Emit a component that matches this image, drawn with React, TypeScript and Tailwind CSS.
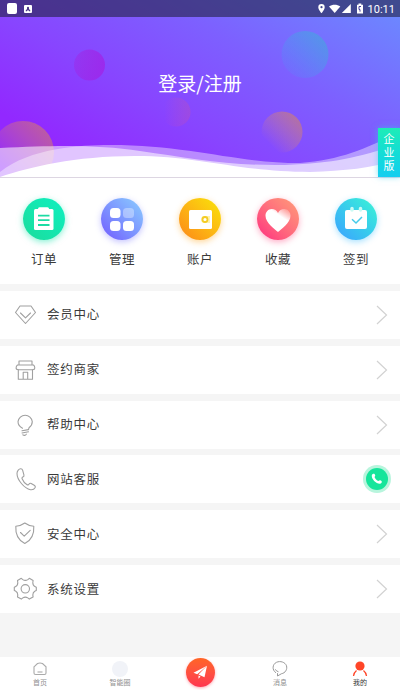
import React from "react";

type IconProps = { children: React.ReactNode };

const LineIcon: React.FC<IconProps> = ({ children }) => (
  <svg
    width="26"
    height="26"
    viewBox="0 0 26 26"
    fill="none"
    stroke="#a0a0a0"
    strokeWidth="1.1"
    strokeLinecap="round"
    strokeLinejoin="round"
  >
    {children}
  </svg>
);

const shortcuts = [
  {
    label: "订单",
    circle: "bg-linear-to-tr from-[#1bdc9c] to-[#0cf0c0] shadow-[0_2px_6px_#14e6ac80]",
    icon: (
      <>
        <rect x="11.5" y="11" width="19.5" height="21" rx="1.5" fill="#fff" />
        <rect x="15.5" y="9.3" width="11" height="4" rx="1.5" fill="#fff" />
        <path d="M15.5 17.6h11.5M15.5 22.2h11.5M15.5 27h11.5" stroke="#1cdca4" strokeWidth="1.8" />
      </>
    ),
  },
  {
    label: "管理",
    circle: "bg-linear-to-tr from-[#7257ff] to-[#8bcdff] shadow-[0_2px_6px_#7b78ff70]",
    icon: (
      <>
        <rect x="9.5" y="10" width="10.5" height="10" rx="3.5" fill="#fff" />
        <rect x="22.5" y="10" width="11" height="10" rx="3.5" fill="#fff" fillOpacity=".35" />
        <rect x="9.5" y="23" width="10.5" height="10" rx="3.5" fill="#fff" />
        <rect x="22.5" y="23" width="11" height="10" rx="3.5" fill="#fff" />
      </>
    ),
  },
  {
    label: "账户",
    circle: "bg-linear-to-tr from-[#fb8618] to-[#f8e506] shadow-[0_2px_6px_#ffa51770]",
    icon: (
      <>
        <rect x="10.5" y="12" width="23" height="19" rx="1.5" fill="#fff" />
        <path d="M31.5 18h-5.5a3.5 3.5 0 0 0 0 7h5.5z" fill="#fff3b0" />
        <circle cx="26.5" cy="21.5" r="2.5" fill="#fff" stroke="#f4cc25" strokeWidth="1.8" />
      </>
    ),
  },
  {
    label: "收藏",
    circle: "bg-linear-to-tr from-[#ff207f] to-[#ff9c78] shadow-[0_2px_6px_#ff467f70]",
    icon: (
      <>
        <defs>
          <linearGradient id="heart" x1=".65" y1=".35" x2=".9" y2="0">
            <stop offset="0" stopColor="#fff" />
            <stop offset="1" stopColor="#fff" stopOpacity=".15" />
          </linearGradient>
        </defs>
        <path
          d="M21.5 34C19 31.8 9 25 9 17.8 9 13.8 11.8 11 15.3 11c2.8 0 5 1.5 6.2 4 1.2-2.5 3.4-4 6.2-4C31.2 11 34 13.8 34 17.8 34 25 24 31.8 21.5 34z"
          fill="url(#heart)"
        />
      </>
    ),
  },
  {
    label: "签到",
    circle: "bg-linear-to-tr from-[#3d9fff] to-[#3cf5d3] shadow-[0_2px_6px_#3dbcff70]",
    icon: (
      <>
        <rect x="10.5" y="12" width="22" height="19" rx="2" fill="#fff" />
        <path d="M17.5 10.5v1.5M26 10.5v1.5" stroke="#c8fbf4" strokeWidth="3.5" strokeLinecap="round" />
        <path d="M17.5 21.3l4 3.7 6-6" fill="none" stroke="#46cbea" strokeWidth="1.5" />
      </>
    ),
  },
];

const menu = [
  {
    label: "会员中心",
    icon: (
      <>
        <path d="M8 4h11l4.500 6.500-10 11L3.500 10.500z" />
        <path d="M8.500 11l5 4.800 5-4.800" />
      </>
    ),
  },
  {
    label: "签约商家",
    icon: (
      <>
        <path d="M7 4h13v4M7 4v4M5.500 8h16c1 .8 1.300 1.800 1.300 3 0 1-1 1.700-2 1.700H6.300c-1.200 0-2.200-.7-2.200-1.700 0-1.200.4-2.200 1.400-3z" />
        <path d="M6.300 12.700v9.500h14.200v-9.500M11.200 22.200v-7h4.500v7" />
      </>
    ),
  },
  {
    label: "帮助中心",
    icon: (
      <>
        <path d="M10.500 16.300C7.500 14.800 6 12.600 6 9.600a7.200 7.200 0 0 1 14.300 0c0 2.600-1.300 4.700-3.300 6.200l-.5 1.700" />
        <path d="M10 18.800l6.500-1.200M10 21l6.500-1.200M10.800 22.800q2 1.500 3.500-.6" />
      </>
    ),
  },
  {
    label: "网站客服",
    phone: true,
    icon: (
      <path d="M8.800 2.700C7 2.500 5 4.900 5 7.500c0 6.300 7.300 15 13.500 16.200 2.200.3 4-.9 4.700-2.200.5-1-.2-1.700-1-2.200l-3-1.800c-1-.5-1.700-.2-2.300.8-.4.800-1 .8-1.800.4-2.400-1.400-4.200-4-5-6-.3-.8 0-1.300.8-1.600 1.100-.4 1.300-1.200 1-2.200l-1.300-4.700c-.3-.9-.9-1.400-1.800-1.500z" />
    ),
  },
  {
    label: "安全中心",
    icon: (
      <>
        <path d="M12.800 2c2.700 2 5.600 3 9 3.200.5 8.300-2 13.800-9 17.300-7-3.500-9.500-9-9-17.300 3.400-.2 6.300-1.200 9-3.200z" />
        <path d="M8.500 11.500l3.700 3.700 6-5.800" />
      </>
    ),
  },
  {
    label: "系统设置",
    icon: (
      <>
        <path d="M9.300 2.300l1.500 1.300c1.500.9 3.600.9 5 0l1.500-1.300 3.800 2.200-.3 2.200c0 1.700 1 3.300 2.500 4l1 .5v3.300l-1.200.6c-1.400.8-2.300 2.200-2.300 3.800l.3 2-3.800 2.200-1.500-1.200c-1.500-.9-3.500-.9-5 0l-1.500 1.200-3.800-2.200.3-2c0-1.600-.9-3-2.300-3.800l-1.200-.6v-3.300l1-.5c1.600-.7 2.500-2.300 2.500-4l-.3-2.200z" />
        <circle cx="13.300" cy="12.800" r="4.200" />
      </>
    ),
  },
];

const StatusBar: React.FC = () => (
  <div className="flex h-[17px] items-center bg-[#222244]/60 pl-[7px] pr-[5px]">
    <div className="h-[11px] w-[10px] rounded-[2px] bg-white" />
    <svg className="ml-[7px]" width="8" height="8" viewBox="0 0 8 8">
      <rect width="8" height="8" rx="1" fill="#fff" />
      <path d="M1.800 6.200V5L3 4.300V2.800a1 1 0 0 1 2 0v1.500L6.200 5v1.200H5V5.400H3v.8z" fill="#4b3688" />
    </svg>
    <svg className="ml-auto" width="48" height="13" viewBox="0 0 48 13" fill="#fff">
      <path d="M4.500 2a3.200 3.200 0 0 0-3.200 3.200c0 2.300 3.200 6 3.200 6s3.200-3.700 3.200-6A3.200 3.200 0 0 0 4.500 2zm0 2.100a1.100 1.100 0 1 1 0 2.200 1.100 1.100 0 0 1 0-2.200z" />
      <path d="M12 4.500c3.300-2.400 8-2.400 11.300 0L17.700 11z" />
      <path d="M33.800 2v9h-9z" />
      <path d="M40 2.800h1.500V1.500h2.800v1.300H46v8.700h-6z" />
      <path d="M44 4.500h-2v3h1v2.200" stroke="#48419a" strokeWidth="1" fill="none" />
    </svg>
    <span className="ml-[3px] pt-px font-[Roboto,sans-serif] text-[11px] leading-none text-white">
      10:11
    </span>
  </div>
);

const Header: React.FC = () => (
  <header className="relative h-[178px] bg-[linear-gradient(30deg,#9228ff_16%,#8845ff_40%,#7d60ff_66%,#6c88ff_97%)]">
    <svg className="absolute inset-0" width="400" height="178" viewBox="0 0 400 178">
      <defs>
        <linearGradient id="orange" x1="0" y1="1" x2="1" y2="0">
          <stop offset=".2" stopColor="#ff9950" stopOpacity="0" />
          <stop offset="1" stopColor="#e08848" stopOpacity=".6" />
        </linearGradient>
        <linearGradient id="teal" x1="0" y1="1" x2="1" y2="0">
          <stop offset="0" stopColor="#40a0ff" stopOpacity=".05" />
          <stop offset="1" stopColor="#38b5d0" stopOpacity=".6" />
        </linearGradient>
        <linearGradient id="pink" x1="0" y1="0" x2="1" y2="0">
          <stop offset="0" stopColor="#b010d0" stopOpacity=".25" />
          <stop offset="1" stopColor="#a818e0" stopOpacity=".6" />
        </linearGradient>
        <linearGradient id="rose" x1="0" y1="0" x2="1" y2="0">
          <stop offset=".1" stopColor="#e050a0" stopOpacity="0" />
          <stop offset="1" stopColor="#d050a0" stopOpacity=".3" />
        </linearGradient>
      </defs>
      <circle cx="89.500" cy="65" r="15.500" fill="url(#pink)" />
      <circle cx="305" cy="54.500" r="23.500" fill="url(#teal)" />
      <circle cx="176" cy="112" r="14.500" fill="url(#rose)" />
      <circle cx="282" cy="132" r="20.500" fill="url(#orange)" />
      <circle cx="23" cy="152" r="31" fill="url(#orange)" />
      <path d="M0 172C30 148 80 145 110 145C190 145 235 163 300 163C340 160 365 149 400 132V178H0z" fill="#fff" fillOpacity=".4" />
      <path d="M0 148C60 145 100 145 140 151C190 158 230 166 285 165C335 163 355 158 400 144V178H0z" fill="#fff" fillOpacity=".55" />
      <path d="M0 177C30 167 75 156 135 156C200 156 240 172 310 172C345 171 370 168 400 160V178H0z" fill="#fff" />
      <path d="M0 177.500h400" stroke="#ddd6e2" />
    </svg>
    <div className="relative">
      <StatusBar />
      <h1 className="pt-[52px] text-center text-[19px] leading-[28px] font-normal text-white">
        登录/注册
      </h1>
    </div>
    <div className="absolute top-[128px] right-0 flex h-[49px] w-[22px] flex-col items-center justify-center bg-linear-to-b from-[#1eecb6] to-[#16cdf0] text-[11px] leading-[13.500px] text-white shadow-[0_0_6px_#35cbee90]">
      <span>企</span>
      <span>业</span>
      <span>版</span>
    </div>
  </header>
);

const PhoneBadge: React.FC = () => (
  <div className="flex size-[28px] items-center justify-center rounded-full bg-[#b8f5dd]">
    <div className="flex size-[22px] items-center justify-center rounded-full bg-[#16e59b]">
      <svg width="12" height="12" viewBox="0 0 12 12" fill="#fff">
        <path d="M.8 2.200C1.200.8 3 .3 3.700 1.200c.8 1 .7 2-.2 2.700.6 1.700 2.300 3.400 4 4.100.9-.9 2.200-.9 3 0 .9 1-.1 2.700-1.700 2.700C5 10.700.3 6 .8 2.200z" />
      </svg>
    </div>
  </div>
);

const BottomNav: React.FC = () => (
  <nav className="flex h-[33px] bg-white text-[7px] leading-[10px] text-[#8f8f8f]">
    <div className="flex w-1/5 flex-col items-center pt-[5px]">
      <svg width="14" height="15" viewBox="0 0 14 15" fill="none" stroke="#aaa" strokeWidth="1.100">
        <path d="M1 4.800L4.500 1.500Q7 .5 9.500 1.500L13 4.800V11q0 1.500-1.500 1.500h-9Q1 12.500 1 11z" />
        <path d="M4.500 10h5" />
      </svg>
      <span>首页</span>
    </div>
    <div className="flex w-1/5 flex-col items-center pt-1">
      <div className="size-4 rounded-full bg-[#f1f3f8]" />
      <span>智能圈</span>
    </div>
    <div className="flex w-1/5 justify-center pt-px">
      <div className="flex size-[29px] items-center justify-center rounded-full bg-linear-to-b from-[#ff6524] to-[#ff3550] shadow-[0_1px_3px_#ff3d5570]">
        <svg width="15" height="15" viewBox="0 0 15 15" fill="#fff">
          <path d="M14 .8L.5 7.800l3.700 1.500z" />
          <path d="M14 .8L5.500 9.600l6 2.600z" />
          <path d="M5.500 10.500v3.300l2-2.300z" />
        </svg>
      </div>
    </div>
    <div className="flex w-1/5 flex-col items-center pt-1">
      <svg width="16" height="16" viewBox="0 0 16 16" fill="none" stroke="#999" strokeWidth="1">
        <path d="M4 11.800C-.2 9 .3 3.300 4.500 1.300c3.700-1.700 8.700-.2 10 3.500 1 3.500-1.200 7.300-5 7.900L5.500 15V12.200" />
        <path d="M3.300 8.300q1 2 3.200 2.500" />
      </svg>
      <span>消息</span>
    </div>
    <div className="flex w-1/5 flex-col items-center pt-1 text-[#333]">
      <svg width="16" height="16" viewBox="0 0 16 16" fill="none" stroke="#ff4528" strokeWidth="1.300">
        <circle cx="8" cy="5" r="4.600" fill="#ff4528" stroke="none" />
        <path d="M4.500 9.500Q2 11.500 1.500 15M11.500 9.500Q14 11.500 14.500 15" />
      </svg>
      <span>我的</span>
    </div>
  </nav>
);

const App: React.FC = () => {
  return (
    <div className="flex h-[690px] w-[400px] flex-col overflow-hidden bg-[#f5f5f5] font-['Noto_Sans_CJK_SC',sans-serif] text-[#3a3a3a]">
      <Header />

      {/* Shortcuts */}
      <section className="flex h-[106px] justify-between bg-white px-[23px] pt-5">
        {shortcuts.map((item) => (
          <div key={item.label} className="flex w-[42px] flex-col items-center">
            <div className={`size-[42px] rounded-full ${item.circle}`}>
              <svg width="42" height="42" viewBox="0.5 0 42 42">
                {item.icon}
              </svg>
            </div>
            <span className="mt-[10px] text-[12.500px] leading-[18px] tracking-[0.500px]">{item.label}</span>
          </div>
        ))}
      </section>

      {/* Menu rows */}
      <main className="mt-[6.850px] flex flex-1 flex-col gap-[6.850px]">
        {menu.map((item) => (
          <div
            key={item.label}
            className="flex h-12 items-center bg-white pl-3 text-[12.500px] tracking-[0.750px]"
          >
            <LineIcon>{item.icon}</LineIcon>
            <span className="ml-[9px]">{item.label}</span>
            <div className="ml-auto">
              {item.phone ? (
                <div className="pr-[9px]">
                  <PhoneBadge />
                </div>
              ) : (
                <svg className="mr-[12px]" width="12" height="20" viewBox="0 0 12 20" fill="none" stroke="#d2d2d2" strokeWidth="1.200">
                  <path d="M1 1l9.500 9L1 19" />
                </svg>
              )}
            </div>
          </div>
        ))}
      </main>

      <BottomNav />
    </div>
  );
};

export default App;
